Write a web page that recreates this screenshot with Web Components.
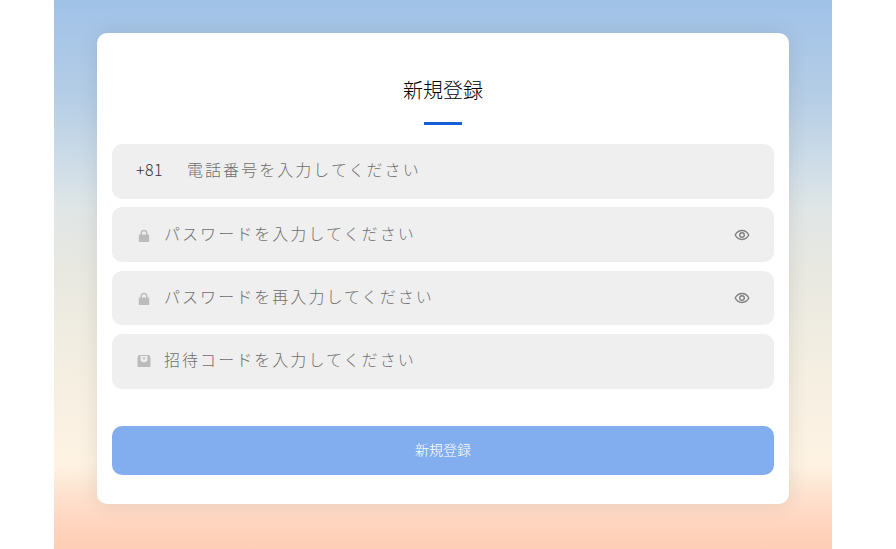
<!DOCTYPE html>
<html lang="ja">
<head>
<meta charset="utf-8">
<title>新規登録</title>
<style>
  html, body { margin: 0; height: 100%; background: #fff; }
  body { font-family: "Noto Sans CJK JP", "Liberation Sans", sans-serif; overflow: hidden; }
</style>
</head>
<body>
<register-page>
  <register-card title="新規登録">
    <form-field prefix="+81" placeholder="電話番号を入力してください"></form-field>
    <form-field icon="lock" eye placeholder="パスワードを入力してください"></form-field>
    <form-field icon="lock" eye placeholder="パスワードを再入力してください"></form-field>
    <form-field icon="mail" placeholder="招待コードを入力してください"></form-field>
    <submit-button slot="action">新規登録</submit-button>
  </register-card>
</register-page>
<script>
const ICONS = {
  lock: `<svg width="14" height="14" viewBox="0 0 14 14"><path fill="#bcbcbc" fill-rule="evenodd" d="M3.500 5.500V4.200a3.500 3.500 0 0 1 7 0v1.300h1c.4 0 .7.3.7.7v6.100c0 .4-.3.7-.7.7h-9c-.4 0-.7-.3-.7-.7V6.200c0-.4.3-.7.7-.7zm1.500 0h4V4.200a2 2 0 0 0-4 0z"/></svg>`,
  mail: `<svg width="14" height="14" viewBox="0 1 14 14"><path fill="#bcbcbc" fill-rule="evenodd" d="M2.500.6h9c.6 0 1 .4 1.200 1l.8 2.400v8c0 .6-.4 1-1 1H1.500c-.6 0-1-.4-1-1V4l.8-2.400c.2-.6.6-1 1.200-1zM3.600 2.100v3.400c0 1.500 1.300 2.700 3.400 2.700s3.400-1.200 3.400-2.700V2.100z"/><path fill="#bcbcbc" d="M5.300 3.600h3.400L7 5.900z"/></svg>`,
  eye: `<svg width="16" height="16" viewBox="0 0 16 16" fill="none" stroke="#808080" stroke-width="1.400"><path d="M1.200 8C2.700 5.100 5 3.500 8 3.500s5.300 1.600 6.800 4.500c-1.500 2.900-3.800 4.500-6.800 4.500S2.700 10.900 1.200 8z"/><circle cx="8" cy="8" r="2.300"/></svg>`
};

class RegisterPage extends HTMLElement {
  constructor() {
    super();
    this.attachShadow({ mode: 'open' });
    this.shadowRoot.innerHTML = `
    <style>
      :host {
        display: block;
        width: 778px;
        height: 549px;
        margin-left: 54px;
        padding: 33px 43px 0;
        box-sizing: border-box;
        background: linear-gradient(180deg, #a0c2e8 0%, #b6cee6 18.2%, #cfdde8 30.4%, #e0e6e6 38.3%, #e8e8e1 48.6%, #f1ede1 62%, #fef3e3 84.5%, #fee2cf 90%, #ffd6c0 95%, #ffcdb5 100%);
      }
    </style>
    <slot></slot>
    `;
  }
}

class RegisterCard extends HTMLElement {
  constructor() {
    super();
    this.attachShadow({ mode: 'open' });
    this.shadowRoot.innerHTML = `
    <style>
      :host {
        display: block;
        height: 471px;
        padding: 0 15px;
        box-sizing: border-box;
        background: #fff;
        border-radius: 10px;
        box-shadow: 0 0 20px rgba(60, 60, 60, 0.13);
      }

      header {
        height: 111px;
        display: flex;
        flex-direction: column;
        align-items: center;
      }

      h1 {
        margin: 42px 0 0;
        font-size: 20px;
        line-height: 30px;
        font-weight: 300;
        color: #000;
      }

      i {
        display: block;
        width: 37.500px;
        height: 3px;
        margin-top: 16.500px;
        background: #1560d8;
      }

      .fields {
        display: flex;
        flex-direction: column;
        gap: 8.67px;
      }

      .action {
        margin-top: 37px;
      }
    </style>
    <header>
      <h1>${this.getAttribute('title')}</h1>
      <i></i>
    </header>
    <div class="fields"><slot></slot></div>
    <div class="action"><slot name="action"></slot></div>
    `;
  }
}

class FormField extends HTMLElement {
  constructor() {
    super();
    this.attachShadow({ mode: 'open' });
    const prefix = this.getAttribute('prefix');
    const icon = this.getAttribute('icon');
    this.shadowRoot.innerHTML = `
    <style>
      :host {
        display: flex;
        align-items: center;
        height: 54.67px;
        padding: 0 24px;
        box-sizing: border-box;
        background: #efefef;
        border-radius: 10px;
      }

      .prefix {
        width: 51px;
        flex: none;
        padding-bottom: 4px;
        font-size: 16px;
        font-weight: 300;
        letter-spacing: 0.4px;
        color: #333;
      }

      .icon {
        width: 27px;
        margin-left: 1px;
        flex: none;
        display: flex;
        padding-top: 2px;
      }

      .text {
        flex: 1;
        padding-bottom: 4px;
        font-size: 16px;
        font-weight: 300;
        letter-spacing: 2.05px;
        color: #6e6e6e;
        white-space: nowrap;
      }

      .eye {
        display: flex;
        margin-right: 0.500px;
      }
    </style>
    ${prefix ? `<span class="prefix">${prefix}</span>` : ''}
    ${icon ? `<span class="icon">${ICONS[icon]}</span>` : ''}
    <span class="text">${this.getAttribute('placeholder')}</span>
    ${this.hasAttribute('eye') ? `<span class="eye">${ICONS.eye}</span>` : ''}
    `;
  }
}

class SubmitButton extends HTMLElement {
  constructor() {
    super();
    this.attachShadow({ mode: 'open' });
    this.shadowRoot.innerHTML = `
    <style>
      :host {
        display: flex;
        align-items: center;
        justify-content: center;
        height: 49px;
        padding-bottom: 3px;
        box-sizing: border-box;
        background: #82aef0;
        border-radius: 10px;
        color: #fff;
        font-size: 14px;
        font-weight: 300;
      }
    </style>
    <slot></slot>
    `;
  }
}

customElements.define('register-page', RegisterPage);
customElements.define('register-card', RegisterCard);
customElements.define('form-field', FormField);
customElements.define('submit-button', SubmitButton);
</script>
</body>
</html>
